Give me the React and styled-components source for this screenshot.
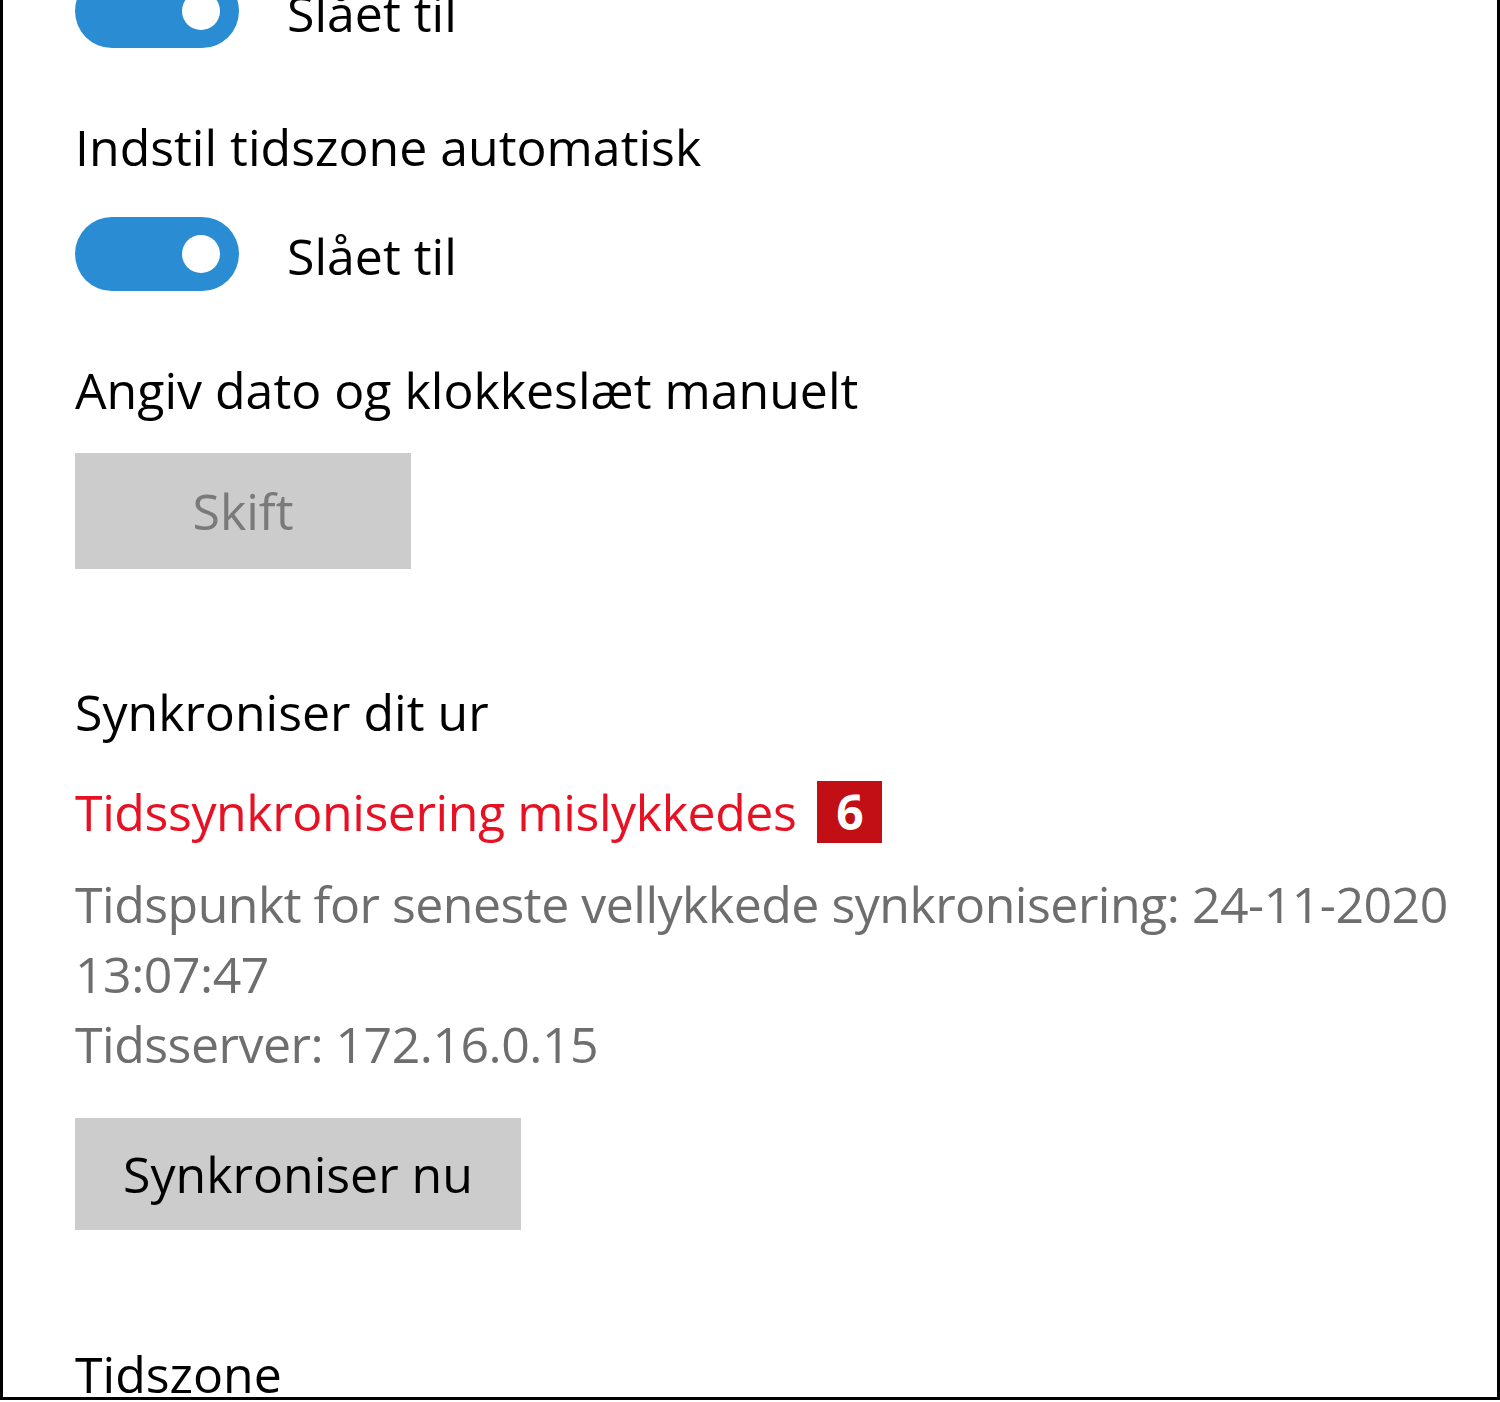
import React from 'react'
import styled, { createGlobalStyle } from 'styled-components'

const GlobalStyle = createGlobalStyle`
    html, body {
        margin: 0;
        padding: 0;
        background: #fff;
    }
    body {
        font-family: "Open Sans", "Noto Sans", sans-serif;
        color: #000;
    }
`

const Frame = styled.div`
    box-sizing: border-box;
    width: 1500px;
    height: 1400px;
    overflow: hidden;
    border-left: 3px solid #000;
    border-right: 3px solid #000;
    border-bottom: 3px solid #000;
    background: #fff;
`

const Content = styled.div`
    display: flex;
    flex-direction: column;
    align-items: flex-start;
    margin-top: -26px;
    padding: 0 0 0 72px;
    font-size: 50px;
    line-height: 70px;
`

const ToggleRow = styled.div`
    display: flex;
    align-items: center;
    gap: 48px;
    margin-top: ${p => p.$gap || 0}px;
`

const Switch = styled.div`
    position: relative;
    width: 164px;
    height: 74px;
    border-radius: 37px;
    background: #2a8dd4;

    &::after {
        content: '';
        position: absolute;
        right: 19px;
        top: 18px;
        width: 38px;
        height: 38px;
        border-radius: 50%;
        background: #fff;
    }
`

const SwitchText = styled.span`
    padding-top: 3px;
`

const Label = styled.div`
    margin-top: ${p => p.$gap || 0}px;
`

const Button = styled.div`
    box-sizing: border-box;
    display: flex;
    align-items: center;
    justify-content: center;
    margin-top: ${p => p.$gap || 0}px;
    width: ${p => p.$w}px;
    height: ${p => p.$h}px;
    background: #cccccc;
    color: ${p => (p.$disabled ? '#7a7a7a' : '#000')};
`

const StatusRow = styled.div`
    display: flex;
    align-items: center;
    gap: 21px;
    margin-top: 30px;
    color: #e81123;
    letter-spacing: -0.4px;
`

const Badge = styled.span`
    display: flex;
    align-items: center;
    justify-content: center;
    width: 65px;
    height: 62px;
    background: #c10f15;
    color: #fff;
    font-weight: 700;
    font-size: 48px;
    line-height: 1;
    letter-spacing: 0;
`

const Details = styled.div`
    margin-top: 22px;
    color: #6e6e6e;
    letter-spacing: -0.5px;
`

const App = () => {
    return (
        <>
            <GlobalStyle />
            <Frame>
                <Content>
                    <ToggleRow>
                        <Switch />
                        <SwitchText>Slået til</SwitchText>
                    </ToggleRow>

                    <Label $gap={64}>Indstil tidszone automatisk</Label>
                    <ToggleRow $gap={35}>
                        <Switch />
                        <SwitchText>Slået til</SwitchText>
                    </ToggleRow>

                    <Label $gap={64}>Angiv dato og klokkeslæt manuelt</Label>
                    <Button $gap={28} $w={336} $h={116} $disabled>Skift</Button>

                    <Label $gap={108}>Synkroniser dit ur</Label>
                    <StatusRow>
                        <span>Tidssynkronisering mislykkedes</span>
                        <Badge>6</Badge>
                    </StatusRow>
                    <Details>
                        <div>Tidspunkt for seneste vellykkede synkronisering: 24-11-2020 13:07:47</div>
                        <div>Tidsserver: 172.16.0.15</div>
                    </Details>
                    <Button $gap={39} $w={446} $h={112}>Synkroniser nu</Button>

                    <Label $gap={109}>Tidszone</Label>
                </Content>
            </Frame>
        </>
    )
}

export default App
